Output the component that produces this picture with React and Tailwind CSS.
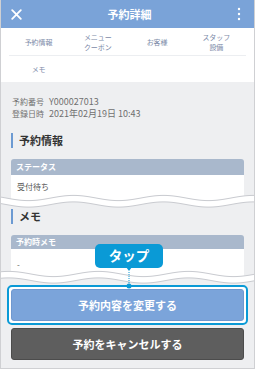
import React from "react";

const JP = { fontFamily: '"Noto Sans CJK JP", "Noto Sans", sans-serif' };

// sine path helper for the torn-page break
function wave(y0, amp, period, phase, w) {
  let d = "";
  for (let x = -2; x <= w + 2; x += 2) {
    const y = y0 + amp * Math.sin(((x - phase) / period) * Math.PI * 2);
    d += (d ? " L" : "M") + x + " " + y.toFixed(2);
  }
  return d;
}

function Break({ h = 16, top = 5, gap = 6.5, phase = 0 }) {
  const w = 253;
  const up = wave(top, 2.6, 90, phase, w);
  const low = wave(top + gap, 2.6, 90, phase, w);
  const lowRev = low
    .split(" L")
    .map((s) => s.replace("M", ""))
    .reverse()
    .join(" L");
  return (
    <svg width={w} height={h} className="block -mx-[10px]">
      <rect x="10" y="0" width="233" height={h} fill="#ffffff" />
      <path d={`${up} L${w + 2} ${h} L-2 ${h} Z`} fill="#eeeff1" />
      <path d={`${up} L${lowRev} Z`} fill="#ffffff" />
      <path d={up} fill="none" stroke="#c9cbd0" strokeWidth="1" />
      <path d={low} fill="none" stroke="#c9cbd0" strokeWidth="1" />
    </svg>
  );
}

function SectionTitle({ children }) {
  return (
    <div className="h-[15px] border-l-2 border-[#6c9ad2] pl-[6px] flex items-center text-[11px] font-bold text-[#333] leading-none">
      {children}
    </div>
  );
}

function CardHead({ children, h }) {
  return (
    <div className={`${h} bg-[#a9b8cc] rounded-t-[3px] px-[5px] flex items-center text-[8px] font-bold text-white leading-none`}>
      {children}
    </div>
  );
}

export default function App() {
  const tabs = [["予約情報"], ["メニュー", "クーポン"], ["お客様"], ["スタッフ", "設備"]];

  return (
    <div style={JP} className="relative w-[255px] h-[369px] overflow-hidden bg-[#eeeff1] border-x border-b border-[#cfd0d3]">
      {/* header */}
      <div className="h-[28px] bg-[#7aa3d8] flex items-center justify-between px-[9px] text-white">
        <svg width="11" height="11" viewBox="0 0 11 11" className="ml-[1px]">
          <path d="M1.2 1.2 L9.8 9.8 M9.8 1.2 L1.2 9.8" stroke="#fff" strokeWidth="1.8" strokeLinecap="round" />
        </svg>
        <span className="text-[11px] font-bold leading-none">予約詳細</span>
        <svg width="4" height="14" viewBox="0 0 4 14" className="mr-[4px]">
          <circle cx="2" cy="2" r="1.2" fill="#fff" />
          <circle cx="2" cy="7" r="1.2" fill="#fff" />
          <circle cx="2" cy="12" r="1.2" fill="#fff" />
        </svg>
      </div>

      {/* tabs */}
      <div className="bg-white px-[8px] text-[7px] text-[#7c8aa8] leading-[10px]">
        <div className="h-[28px] grid grid-cols-4 border-b border-[#eceef1]">
          {tabs.map((t, i) => (
            <div key={i} className="flex flex-col items-center justify-center text-center">
              {t.map((l) => (
                <span key={l}>{l}</span>
              ))}
            </div>
          ))}
        </div>
        <div className="h-[26px] grid grid-cols-4">
          <div className="flex items-center justify-center">メモ</div>
        </div>
      </div>

      {/* body */}
      <div className="px-[10px]">
        <div className="pt-[14px] pl-[1px] leading-[12px] text-[#707070]">
          <div className="flex items-center gap-[5px] h-[12px]">
            <span className="text-[8px]">予約番号</span>
            <span className="text-[9px]">Y000027013</span>
          </div>
          <div className="flex items-center gap-[5px] h-[12px]">
            <span className="text-[8px]">登録日時</span>
            <span className="text-[9px]">2021年02月19日 10:43</span>
          </div>
        </div>

        <div className="mt-[13px]">
          <SectionTitle>予約情報</SectionTitle>
        </div>

        <div className="mt-[11px]">
          <CardHead h="h-[16px]">ステータス</CardHead>
          <div className="h-[18px] bg-white px-[6px] pt-[6px] text-[8px] leading-[12px] text-[#555]">受付待ち</div>
        </div>

        <Break h={16} top={5} gap={6.5} phase={5} />

        <SectionTitle>メモ</SectionTitle>

        <div className="mt-[11px]">
          <CardHead h="h-[14px]">予約時メモ</CardHead>
          <div className="h-[20px] bg-white px-[6px] pt-[10px] text-[8px] leading-[12px] text-[#555]">-</div>
        </div>

        <Break h={16} top={5} gap={6.5} phase={30} />

        {/* buttons */}
        <div className="-mx-[4px] border-2 border-[#0a9ad6] rounded-[5px] bg-white p-[2px]">
          <button className="w-full h-[32px] bg-[#7ba4da] border border-[#6f98cf] rounded-[3px] text-white text-[11px] font-bold">
            予約内容を変更する
          </button>
        </div>
        <button className="mt-[3px] w-full h-[32px] bg-[#5e5e5e] border border-[#4c4c4c] rounded-[3px] text-white text-[11px] font-bold">
          予約をキャンセルする
        </button>
      </div>

      {/* tap callout */}
      <div className="absolute left-[94px] top-[244px] w-[68px] h-[24px] rounded-[5px] bg-[#0a9ad6] flex items-center justify-center text-white text-[13.5px] font-bold leading-none">
        タップ
      </div>
      <svg className="absolute left-[120px] top-[267px]" width="16" height="24" viewBox="0 0 16 24">
        <path d="M5 0 L11 0 L8 4 Z" fill="#0a9ad6" />
        <line x1="8" y1="5" x2="8" y2="18" stroke="#0a9ad6" strokeWidth="1" strokeDasharray="1 1" />
        <circle cx="8" cy="19" r="2.5" fill="#0a9ad6" />
      </svg>
    </div>
  );
}
